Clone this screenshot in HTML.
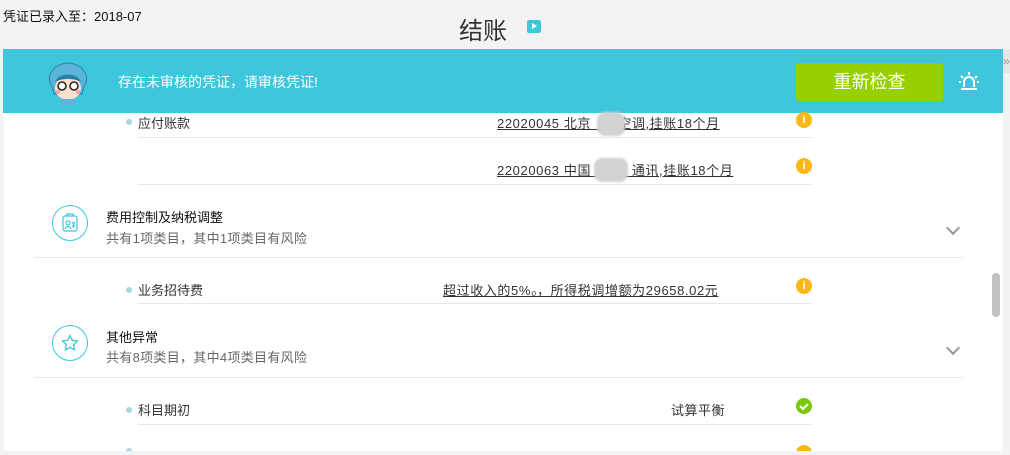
<!DOCTYPE html>
<html><head><meta charset="utf-8"><style>
*{margin:0;padding:0;box-sizing:border-box}
html{height:455px;overflow:hidden}
body{width:1010px;height:455px;overflow:hidden;background:#f2f3f5;font-family:"Liberation Sans","Noto Sans CJK SC",sans-serif;position:relative;color:#333}
.a{position:absolute;white-space:nowrap}
.line{position:absolute;height:1px;background:#e8e8e8}
.dot{position:absolute;width:6px;height:6px;border-radius:50%;background:#a9d5e0}
.u{text-decoration:underline;color:#333;font-size:13px;letter-spacing:0.6px}
.ic{position:absolute;width:16px;height:16px;border-radius:50%;background:#fbb713;color:#fff;font:bold 11px/16px "Liberation Sans",sans-serif;text-align:center}
.ok{background:#7cc80e}
.circ{position:absolute;width:36px;height:36px;border:1px solid #3ec6dc;border-radius:50%}
.chev{position:absolute;width:10px;height:10px;border-right:2px solid #999;border-bottom:2px solid #999;transform:rotate(45deg)}
.blur{position:absolute;background:#d2d2d2;border-radius:8px;filter:blur(1px)}
</style></head><body>
<div class="a" style="left:3px;top:6px;font-size:13px;color:#111">凭证已录入至：2018-07</div>
<div class="a" style="left:459px;top:11px;font-size:24px;color:#333">结账</div>
<div class="a" style="left:527px;top:20px;width:14px;height:13px;background:#3ec6dc;border-radius:2px"><div style="position:absolute;left:5px;top:3px;border-left:5px solid #fff;border-top:3.5px solid transparent;border-bottom:3.5px solid transparent"></div></div>
<div class="a" style="left:4px;top:113px;width:999px;height:338px;background:#fff"></div>
<div class="a" style="left:3px;top:49px;width:1000px;height:64px;background:#3ec6dc"></div>
<div class="a" style="left:1003px;top:49px;width:7px;height:24px;background:#e6e6e6;color:#999;font-size:12px;line-height:24px">»</div>
<svg class="a" style="left:44px;top:58px" width="48" height="50" viewBox="0 0 48 50"><path d="M8 28C2 22 6 6 24 5C42 6 46 22 40 28L38 36H10Z" fill="#5ab6d9" stroke="#2a7fa8"/><ellipse cx="24" cy="30" rx="13" ry="12" fill="#fde0cc"/><path d="M11 24C14 14 34 14 37 24C30 20 18 20 11 24Z" fill="#2a7fa8"/><circle cx="18" cy="28" r="4" fill="#fff" stroke="#222" stroke-width="1.5"/><circle cx="30" cy="28" r="4" fill="#fff" stroke="#222" stroke-width="1.5"/><circle cx="14" cy="34" r="2" fill="#f5a0a0"/><circle cx="34" cy="34" r="2" fill="#f5a0a0"/><rect x="16" y="41" width="16" height="6" fill="#5ab6d9"/></svg>
<div class="a" style="left:118px;top:72px;font-size:14px;color:#fff">存在未审核的凭证，请审核凭证!</div>
<div class="a" style="left:796px;top:63px;width:147px;height:38px;background:#97d000;border-radius:2px;color:#fff;font-size:18px;line-height:38px;text-align:center">重新检查</div>
<svg class="a" style="left:958px;top:70px" width="22" height="22" viewBox="0 0 22 22" fill="none" stroke="#fff" stroke-width="2"><path d="M6 17V12a5 5 0 0 1 10 0v5M3 19h16M11 2v3M3 6l2 2M19 6l-2 2M1 12h2M19 12h2"/></svg>

<div class="dot" style="left:126px;top:119px"></div>
<div class="a" style="left:138px;top:113px;font-size:13px">应付账款</div>
<div class="a u" style="left:497px;top:113px">22020045 北京　　空调,挂账18个月</div>
<div class="blur" style="left:597px;top:112px;width:28px;height:24px"></div>
<div class="ic" style="left:796px;top:112px">i</div>
<div class="line" style="left:138px;top:137px;width:674px"></div>
<div class="a u" style="left:497px;top:160px">22020063 中国　　　通讯,挂账18个月</div>
<div class="blur" style="left:594px;top:158px;width:34px;height:24px"></div>
<div class="ic" style="left:796px;top:158px">i</div>
<div class="line" style="left:138px;top:184px;width:674px"></div>

<div class="circ" style="left:52px;top:205px"></div>
<svg class="a" style="left:61px;top:213px" width="18" height="20" viewBox="0 0 18 20" fill="none" stroke="#3ec6dc" stroke-width="1.2"><rect x="2" y="3" width="14" height="15" rx="2"/><path d="M6 3V1h6v2"/><circle cx="7" cy="10" r="2"/><path d="M4 16c0-3 6-3 6 0"/><path d="M11 9l1.5 2 1.5-2M12.5 11v4M11 13h3"/></svg>
<div class="a" style="left:106px;top:207px;font-size:13px;color:#111">费用控制及纳税调整</div>
<div class="a" style="left:106px;top:228px;font-size:13px;color:#666;letter-spacing:0.3px">共有1项类目，其中1项类目有风险</div>
<div class="chev" style="left:948px;top:223px"></div>
<div class="line" style="left:34px;top:257px;width:929px"></div>

<div class="dot" style="left:126px;top:287px"></div>
<div class="a" style="left:138px;top:280px;font-size:13px">业务招待费</div>
<div class="a u" style="left:443px;top:280px">超过收入的5%₀，所得税调增额为29658.02元</div>
<div class="ic" style="left:796px;top:278px">i</div>
<div class="line" style="left:138px;top:303px;width:674px"></div>

<div class="circ" style="left:52px;top:325px"></div>
<svg class="a" style="left:61px;top:334px" width="18" height="18" viewBox="0 0 18 18" fill="none" stroke="#3ec6dc" stroke-width="1.3"><path d="M9 1.5l2.3 4.8 5.2.7-3.8 3.6.9 5.2L9 13.3l-4.6 2.5.9-5.2L1.5 7l5.2-.7z"/></svg>
<div class="a" style="left:106px;top:327px;font-size:13px;color:#111">其他异常</div>
<div class="a" style="left:106px;top:347px;font-size:13px;color:#666;letter-spacing:0.3px">共有8项类目，其中4项类目有风险</div>
<div class="chev" style="left:948px;top:343px"></div>
<div class="line" style="left:34px;top:377px;width:929px"></div>

<div class="dot" style="left:126px;top:407px"></div>
<div class="a" style="left:138px;top:400px;font-size:13px">科目期初</div>
<div class="a" style="left:671px;top:400px;font-size:13px;letter-spacing:0.5px">试算平衡</div>
<div class="ic ok" style="left:796px;top:398px"><svg width="16" height="16" viewBox="0 0 16 16" fill="none" stroke="#fff" stroke-width="2"><path d="M4 8l3 3 5-5"/></svg></div>
<div class="line" style="left:138px;top:424px;width:674px"></div>
<div class="dot" style="left:126px;top:448px"></div>
<div class="ic" style="left:796px;top:445px"></div>
<div class="a" style="left:0;top:451px;width:1010px;height:4px;background:#f2f3f5"></div>
<div class="a" style="left:992px;top:273px;width:8px;height:44px;background:#c1c1c1;border-radius:4px"></div>
</body></html>
